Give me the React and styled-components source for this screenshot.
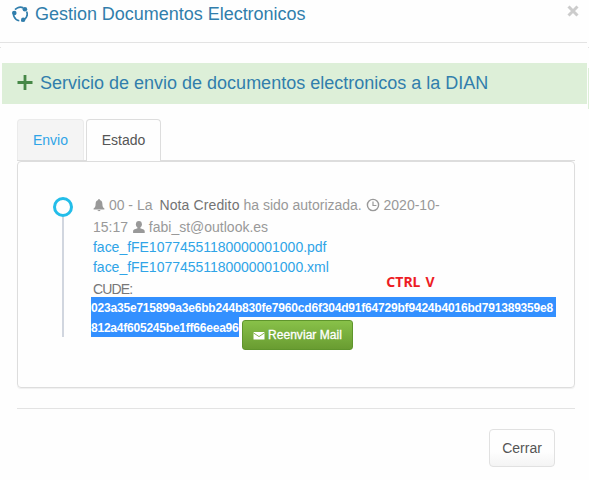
import styled, { createGlobalStyle } from "styled-components";

const GlobalStyle = createGlobalStyle`
  * {
    box-sizing: border-box;
  }

  body {
    margin: 0;
    overflow: hidden;
    background: #fefefe;
    font-family: "Liberation Sans", Arial, sans-serif;
    font-size: 14px;
    color: #555;
  }
`;

const Modal = styled.div`
  width: 589px;
  height: 480px;
  background:
    linear-gradient(#ddefd8, #ddefd8) 588px 68px / 1px 41px no-repeat,
    linear-gradient(#e3e3e3, #e3e3e3) 588px 47px / 1px 1px no-repeat,
    linear-gradient(#e3e3e3, #e3e3e3) 0 47px / 1px 1px no-repeat,
    #fefefe;
`;

const Header = styled.header`
  display: flex;
  width: 587px;
  height: 43px;
  padding: 4px 9px 0 12px;
  border-bottom: 1px solid #e3e3e3;
`;

const Title = styled.h4`
  display: flex;
  flex: 1;
  gap: 7px;
  height: 20px;
  margin: 0;
  font-size: 18px;
  font-weight: 400;
  line-height: 20px;
  color: #317eac;
  white-space: nowrap;
  letter-spacing: -0.02px;
`;

const CloseIcon = styled.svg`
  width: 12px;
  height: 12px;
  margin: 1px -1px 0 0;
`;

const Notice = styled.div`
  display: flex;
  align-items: center;
  gap: 7px;
  width: 585px;
  height: 41px;
  margin: 20px 0 0 2px;
  padding: 0 15px 1px;
  background: #ddefd8;
  font-size: 18px;
  line-height: 20px;
  color: #317eac;
  white-space: nowrap;
`;

const Body = styled.main`
  padding: 15px 14px 0 17px;
`;

const Tabs = styled.nav`
  display: flex;
  gap: 2px;
  height: 42px;
  border-bottom: 1px solid #ddd;
`;

const Tab = styled.button`
  width: ${({ $width }) => $width}px;
  height: ${({ $active }) => ($active ? 42 : 41)}px;
  padding: 0 0 1px;
  border: 1px solid ${({ $active }) => ($active ? "#ddd" : "#ebebeb")};
  border-bottom: 0;
  border-radius: 4px 4px 0 0;
  background: ${({ $active }) => ($active ? "#fefefe" : "#f4f4f4")};
  font: inherit;
  color: ${({ $active }) => ($active ? "#555" : "#2fa4e7")};
`;

const Panel = styled.section`
  display: flex;
  gap: 18px;
  height: 227px;
  padding: 35px 18px 0 35px;
  border: 1px solid #ddd;
  border-radius: 4px;
  box-shadow: 0 1px 1px rgba(0, 0, 0, 0.06);
`;

const Timeline = styled.div`
  display: flex;
  flex: none;
  flex-direction: column;
  align-items: center;
  width: 20px;
`;

const Dot = styled.div`
  width: 20px;
  height: 20px;
  border: 3px solid #23bde9;
  border-radius: 50%;
`;

const Track = styled.div`
  width: 2px;
  height: 120px;
  background: #d1d6df;
`;

const Details = styled.div`
  display: flex;
  flex-direction: column;
  align-items: flex-start;
`;

const Row = styled.div`
  display: flex;
  align-items: center;
  height: ${({ $height }) => $height}px;
  padding-left: 2px;
  color: #999;
  white-space: pre;
  letter-spacing: ${({ $spacing }) => $spacing || 0}px;
`;

const DocType = styled.span`
  margin-left: -1px;
  color: #737373;
  letter-spacing: 0.13px;
`;

const FileLink = styled.a`
  color: #2fa4e7;
`;

const CodeLabel = styled.span`
  color: #777;
  letter-spacing: -0.85px;
`;

const Shortcut = styled.b`
  margin-left: 254px;
  padding-bottom: 15px;
  font-family: "Noto Sans", sans-serif;
  font-size: 14px;
  line-height: 16px;
  color: #ed1c24;
  word-spacing: 1.5px;
`;

const CodeRow = styled.div`
  display: flex;
  gap: 3px;
  height: 20px;
`;

const Code = styled.b`
  width: ${({ $width }) => $width}px;
  height: 20px;
  background: #3390ff;
  font-size: 12px;
  line-height: 22px;
  color: #fff;
  white-space: nowrap;
  letter-spacing: ${({ $spacing }) => $spacing}px;
`;

const MailButton = styled.button`
  display: flex;
  align-items: center;
  justify-content: center;
  gap: 3px;
  width: 111px;
  height: 30px;
  margin-top: 3px;
  padding: 0;
  border: 1px solid #5f952c;
  border-radius: 3px;
  background: linear-gradient(#88c149, #699c31);
  font: 12px "Liberation Sans", Arial, sans-serif;
  color: #fff;
  -webkit-text-stroke: 0.3px #fff;
  white-space: nowrap;
  letter-spacing: 0.05px;
`;

const Footer = styled.footer`
  display: flex;
  justify-content: flex-end;
  margin-top: 20px;
  padding: 20px 20px 0 0;
  border-top: 1px solid #e3e3e3;
`;

const CloseButton = styled.button`
  width: 66px;
  height: 38px;
  padding: 0;
  border: 1px solid #e1e1e1;
  border-radius: 4px;
  background: linear-gradient(#fefefe 60%, #f4f4f4);
  font: inherit;
  color: #555;
`;

function CirclesIcon() {
  return (
    <svg width="16" height="18" viewBox="0 0 16 18" fill="#317eac">
      <circle
        cx="8.3"
        cy="10"
        r="6.8"
        fill="none"
        stroke="#317eac"
        strokeWidth="1.7"
        strokeDasharray="9 1.8 1.6 1.84"
        transform="rotate(-22 8.3 10)"
      />
      <circle cx="12.9" cy="5.3" r="2.3" />
      <circle cx="2.3" cy="9" r="2.3" />
      <circle cx="11.2" cy="15.8" r="2.2" />
    </svg>
  );
}

function PlusIcon() {
  return (
    <svg width="16" height="16" viewBox="0 0 16 16">
      <path d="M8 0v15M.5 7.5h15" stroke="#468847" strokeWidth="2.8" />
    </svg>
  );
}

function BellIcon() {
  return (
    <svg width="12" height="14" viewBox="0 0 12 14" fill="#999">
      <path d="M5.3 1h1.4v1.1C8.5 2.5 9.4 4 9.4 6c0 2.5.5 3.5 2 4.6v.9H.6v-.9c1.5-1.1 2-2.1 2-4.6 0-2 .9-3.5 2.7-3.9zM4.6 12h2.8c0 1.6-2.8 1.6-2.8 0z" />
    </svg>
  );
}

function ClockIcon() {
  return (
    <svg width="14" height="14" viewBox="0 0 14 14" fill="none" stroke="#999">
      <circle cx="7" cy="7" r="5.6" strokeWidth="1.4" />
      <path d="M7 3.5v4h3.4" strokeWidth="1.2" />
    </svg>
  );
}

function UserIcon() {
  return (
    <svg width="13" height="14" viewBox="0 0 13 14" fill="#999">
      <ellipse cx="6.9" cy="4.3" rx="3" ry="3.4" />
      <path d="M5.5 6h2.8v2.2c1.4.7 4.4 1.1 4.4 2.8v2H1.1v-2c0-1.7 3-2.1 4.4-2.8z" />
    </svg>
  );
}

function MailIcon() {
  return (
    <svg width="12" height="9" viewBox="0 0 12 9">
      <path d="M.5 1h11v7.5H.5z" fill="#fff" />
      <path
        d="M.3 1.8L6 5.6l5.7-3.8"
        fill="none"
        stroke="#79ae3c"
        strokeWidth=".9"
      />
    </svg>
  );
}

export default function App() {
  return (
    <>
      <GlobalStyle />
      <Modal>
        <Header>
          <Title>
            <CirclesIcon />
            Gestion Documentos Electronicos
          </Title>
          <CloseIcon viewBox="0 0 12 12">
            <path d="M1.5 1.5l9 9M10.5 1.5l-9 9" stroke="#ccc" strokeWidth="3" />
          </CloseIcon>
        </Header>

        <Notice>
          <PlusIcon />
          Servicio de envio de documentos electronicos a la DIAN
        </Notice>

        <Body>
          <Tabs>
            <Tab $width={67}>Envio</Tab>
            <Tab $width={75} $active>
              Estado
            </Tab>
          </Tabs>

          <Panel>
            <Timeline>
              <Dot />
              <Track />
            </Timeline>

            <Details>
              <Row $height={16}>
                <BellIcon />
                {" 00 - La "}
                <DocType> Nota Credito</DocType>
                {" ha sido autorizada. "}
                <ClockIcon />
                {" 2020-10-"}
              </Row>
              <Row $height={28}>
                {"15:17 "}
                <UserIcon />
                {" fabi_st@outlook.es"}
              </Row>
              <Row $height={12} $spacing={-0.02}>
                <FileLink>face_fFE10774551180000001000.pdf</FileLink>
              </Row>
              <Row $height={28} $spacing={-0.02}>
                <FileLink>face_fFE10774551180000001000.xml</FileLink>
              </Row>
              <Row $height={16}>
                <CodeLabel>CUDE:</CodeLabel>
                <Shortcut>CTRL V</Shortcut>
              </Row>
              <CodeRow>
                <Code $width={465} $spacing={-0.19}>
                  023a35e715899a3e6bb244b830fe7960cd6f304d91f64729bf9424b4016bd791389359e8
                </Code>
              </CodeRow>
              <CodeRow>
                <Code $width={148} $spacing={-0.22}>
                  812a4f605245be1ff66eea96
                </Code>
                <MailButton>
                  <MailIcon />
                  Reenviar Mail
                </MailButton>
              </CodeRow>
            </Details>
          </Panel>

          <Footer>
            <CloseButton>Cerrar</CloseButton>
          </Footer>
        </Body>
      </Modal>
    </>
  );
}
